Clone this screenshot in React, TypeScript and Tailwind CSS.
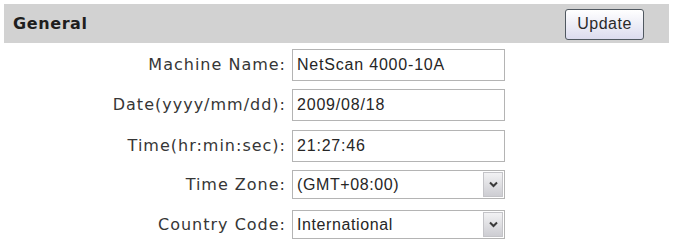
import React from 'react';

const labelFont = { fontFamily: '"DejaVu Sans", Verdana, sans-serif' };

function Chevron() {
  return (
    <svg width="9" height="7" viewBox="0 0 9 7">
      <path d="M1 1.5 L4.5 5 L8 1.5" fill="none" stroke="#3a3a3a" strokeWidth="2" />
    </svg>
  );
}

function TextRow({ label, value, className }: { label: string; value: string; className?: string }) {
  return (
    <div className={`flex items-center ${className ?? ''}`}>
      <div className="w-[288px] pr-[6px] text-right text-[16px] tracking-[1px] text-[#363636]" style={labelFont}>
        {label}
      </div>
      <div className="flex h-[32px] w-[213px] items-center border border-[#b4b4b4] bg-white px-[4px] font-['Liberation_Sans',Arial,sans-serif] text-[16px] tracking-[0.8px] text-[#262626]">
        {value}
      </div>
    </div>
  );
}

function SelectRow({ label, value, className }: { label: string; value: string; className?: string }) {
  return (
    <div className={`flex items-center ${className ?? ''}`}>
      <div className="w-[288px] pr-[6px] text-right text-[16px] tracking-[1px] text-[#363636]" style={labelFont}>
        {label}
      </div>
      <div className="flex h-[29px] w-[213px] items-stretch border border-[#b4b4b4] bg-white">
        <div className="flex flex-1 items-center px-[4px] font-['Liberation_Sans',Arial,sans-serif] text-[16px] tracking-[0.6px] text-[#262626]">
          {value}
        </div>
        <div className="m-[1px] flex w-[20px] items-center justify-center border border-[#c4c4c8] bg-gradient-to-b from-[#f2f2f4] to-[#cdcdd2]">
          <Chevron />
        </div>
      </div>
    </div>
  );
}

export default function App() {
  return (
    <div className="h-[242px] w-[673px] bg-white p-[4px]">
      {/* header */}
      <div className="flex h-[39px] items-center justify-between bg-[#d2d2d2] pl-[9px] pr-[25px]">
        <span className="text-[16px] font-bold tracking-[0.6px] text-[#1e1e1e]" style={labelFont}>
          General
        </span>
        <button className="mt-[1px] h-[31px] w-[79px] rounded-[3px] border border-[#505860] bg-gradient-to-b from-white to-[#dcdcee] font-['Liberation_Sans',Arial,sans-serif] text-[16px] tracking-[0.5px] text-[#2a2a2a]">
          Update
        </button>
      </div>

      <div className="flex flex-col">
        <TextRow className="mt-[6px]" label="Machine Name:" value="NetScan 4000-10A" />
        <TextRow className="mt-[8px]" label="Date(yyyy/mm/dd):" value="2009/08/18" />
        <TextRow className="mt-[9px]" label="Time(hr:min:sec):" value="21:27:46" />
        <SelectRow className="mt-[8px]" label="Time Zone:" value="(GMT+08:00)" />
        <SelectRow className="mt-[11px]" label="Country Code:" value="International" />
      </div>
    </div>
  );
}
